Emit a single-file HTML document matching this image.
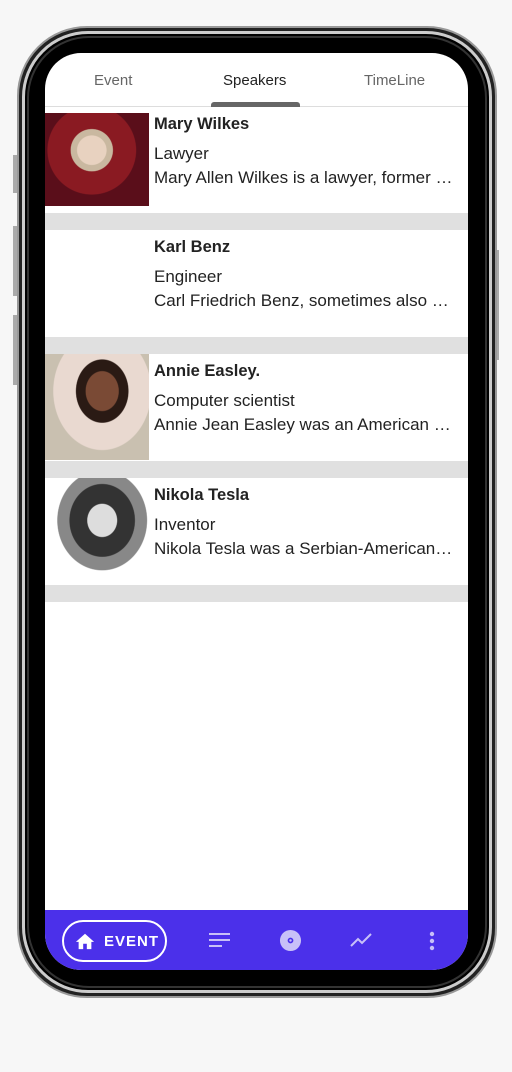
<!DOCTYPE html>
<html><head><meta charset="utf-8"><style>
*{margin:0;padding:0;box-sizing:border-box}
body{width:512px;height:1072px;background:#f7f7f7;position:relative;overflow:hidden;font-family:"Liberation Sans",Roboto,sans-serif}
.frame{position:absolute;left:17px;top:26px;width:480px;height:972px;border-radius:70px;background:#222;border:2px solid #999}
.frame2{position:absolute;left:22px;top:31px;width:470px;height:962px;border-radius:66px;background:#000;border:3px solid #ccc}
.frame3{position:absolute;left:27px;top:36px;width:460px;height:952px;border-radius:62px;background:#000;border:2px solid #333}
.btn{position:absolute;background:#aaa;width:4px}
.screen{position:absolute;left:45px;top:53px;width:423px;height:917px;border-radius:36px;background:#fff;overflow:hidden}
.tabs{height:54px;border-bottom:1px solid #ddd;position:relative}
.tab{position:absolute;top:19px;font-size:15px;color:#666}
.ind{position:absolute;left:166px;top:49px;width:89px;height:5px;background:#666;border-radius:3px 3px 0 0}
.row{position:absolute;left:0;width:423px;height:106px;background:#fff}
.gap{position:absolute;left:0;width:423px;height:17px;background:#e0e0e0}
.img{position:absolute;left:0;top:6px;width:104px;height:93px}
.t{position:absolute;left:109px;font-size:17px;color:#222;white-space:nowrap}
.n{top:8px;font-weight:bold;font-size:16.5px}
.r{top:37px}
.d{top:61px}
.bar{position:absolute;left:0;top:857px;width:423px;height:60px;background:#4b30ea}
.pill{position:absolute;left:17px;top:10px;width:105px;height:42px;border:2px solid #fff;border-radius:21px;color:#fff;font-size:15px;letter-spacing:1px;font-weight:bold}
</style></head><body>
<div class="btn" style="left:13px;top:155px;height:38px"></div>
<div class="btn" style="left:13px;top:226px;height:70px"></div>
<div class="btn" style="left:13px;top:315px;height:70px"></div>
<div class="btn" style="left:495px;top:250px;height:110px"></div>
<div class="frame"></div><div class="frame2"></div><div class="frame3"></div>
<div class="screen">
<div class="tabs">
<span class="tab" style="left:49px">Event</span>
<span class="tab" style="left:178px;color:#222">Speakers</span>
<span class="tab" style="left:319px">TimeLine</span>
<div class="ind"></div>
</div>
<div class="row" style="top:54px"><div class="img" style="background:radial-gradient(circle at 45% 40%,#e8d2c0 0 18%,#c9b8a0 19% 26%,#8a1a22 27% 55%,#5a0e1a 56%)"></div>
<div class="t n">Mary Wilkes</div><div class="t r">Lawyer</div><div class="t d">Mary Allen Wilkes is a lawyer, former …</div></div>
<div class="gap" style="top:160px"></div>
<div class="row" style="top:177px">
<div class="t n">Karl Benz</div><div class="t r">Engineer</div><div class="t d">Carl Friedrich Benz, sometimes also …</div></div>
<div class="gap" style="top:284px"></div>
<div class="row" style="top:301px"><div class="img" style="top:0;height:106px;background:radial-gradient(ellipse at 55% 35%,#7a4a35 0 20%,#2a1a14 21% 32%,#e9d9d0 33% 60%,#c9c0b0 61%)"></div>
<div class="t n">Annie Easley.</div><div class="t r">Computer scientist</div><div class="t d">Annie Jean Easley was an American …</div></div>
<div class="gap" style="top:408px"></div>
<div class="row" style="top:425px"><div class="img" style="top:0;height:106px;background:radial-gradient(ellipse at 55% 40%,#ddd 0 18%,#333 19% 40%,#888 41% 55%,#fff 56%)"></div>
<div class="t n">Nikola Tesla</div><div class="t r">Inventor</div><div class="t d">Nikola Tesla was a Serbian-American…</div></div>
<div class="gap" style="top:532px"></div>
<div class="bar">
<div class="pill"><svg style="position:absolute;left:10px;top:9px" width="22" height="20" viewBox="0 0 24 22"><path d="M10 20v-6h4v6h5v-8h3L12 3 2 12h3v8z" fill="#fff"/></svg><span style="position:absolute;left:40px;top:11px">EVENT</span></div>
<svg style="position:absolute;left:164px;top:22px" width="22" height="16" viewBox="0 0 22 16"><rect x="0" y="1" width="21" height="2" fill="#c8c0f8"/><rect x="0" y="7" width="21" height="2" fill="#c8c0f8"/><rect x="0" y="13" width="13" height="2" fill="#c8c0f8"/></svg>
<svg style="position:absolute;left:234px;top:19px" width="23" height="23" viewBox="0 0 24 24"><circle cx="12" cy="12" r="11" fill="#c8c0f8"/><circle cx="12" cy="12" r="3" fill="#4b30ea"/><circle cx="12" cy="12" r="1.3" fill="#c8c0f8"/></svg>
<svg style="position:absolute;left:305px;top:22px" width="24" height="16" viewBox="0 0 24 16"><path d="M1 14l7-7 4 4 9-9" stroke="#c8c0f8" stroke-width="2" fill="none"/></svg>
<svg style="position:absolute;left:383px;top:20px" width="8" height="22" viewBox="0 0 8 22"><circle cx="4" cy="4" r="2.2" fill="#c8c0f8"/><circle cx="4" cy="11" r="2.2" fill="#c8c0f8"/><circle cx="4" cy="18" r="2.2" fill="#c8c0f8"/></svg>
</div>
</div>
</body></html>
